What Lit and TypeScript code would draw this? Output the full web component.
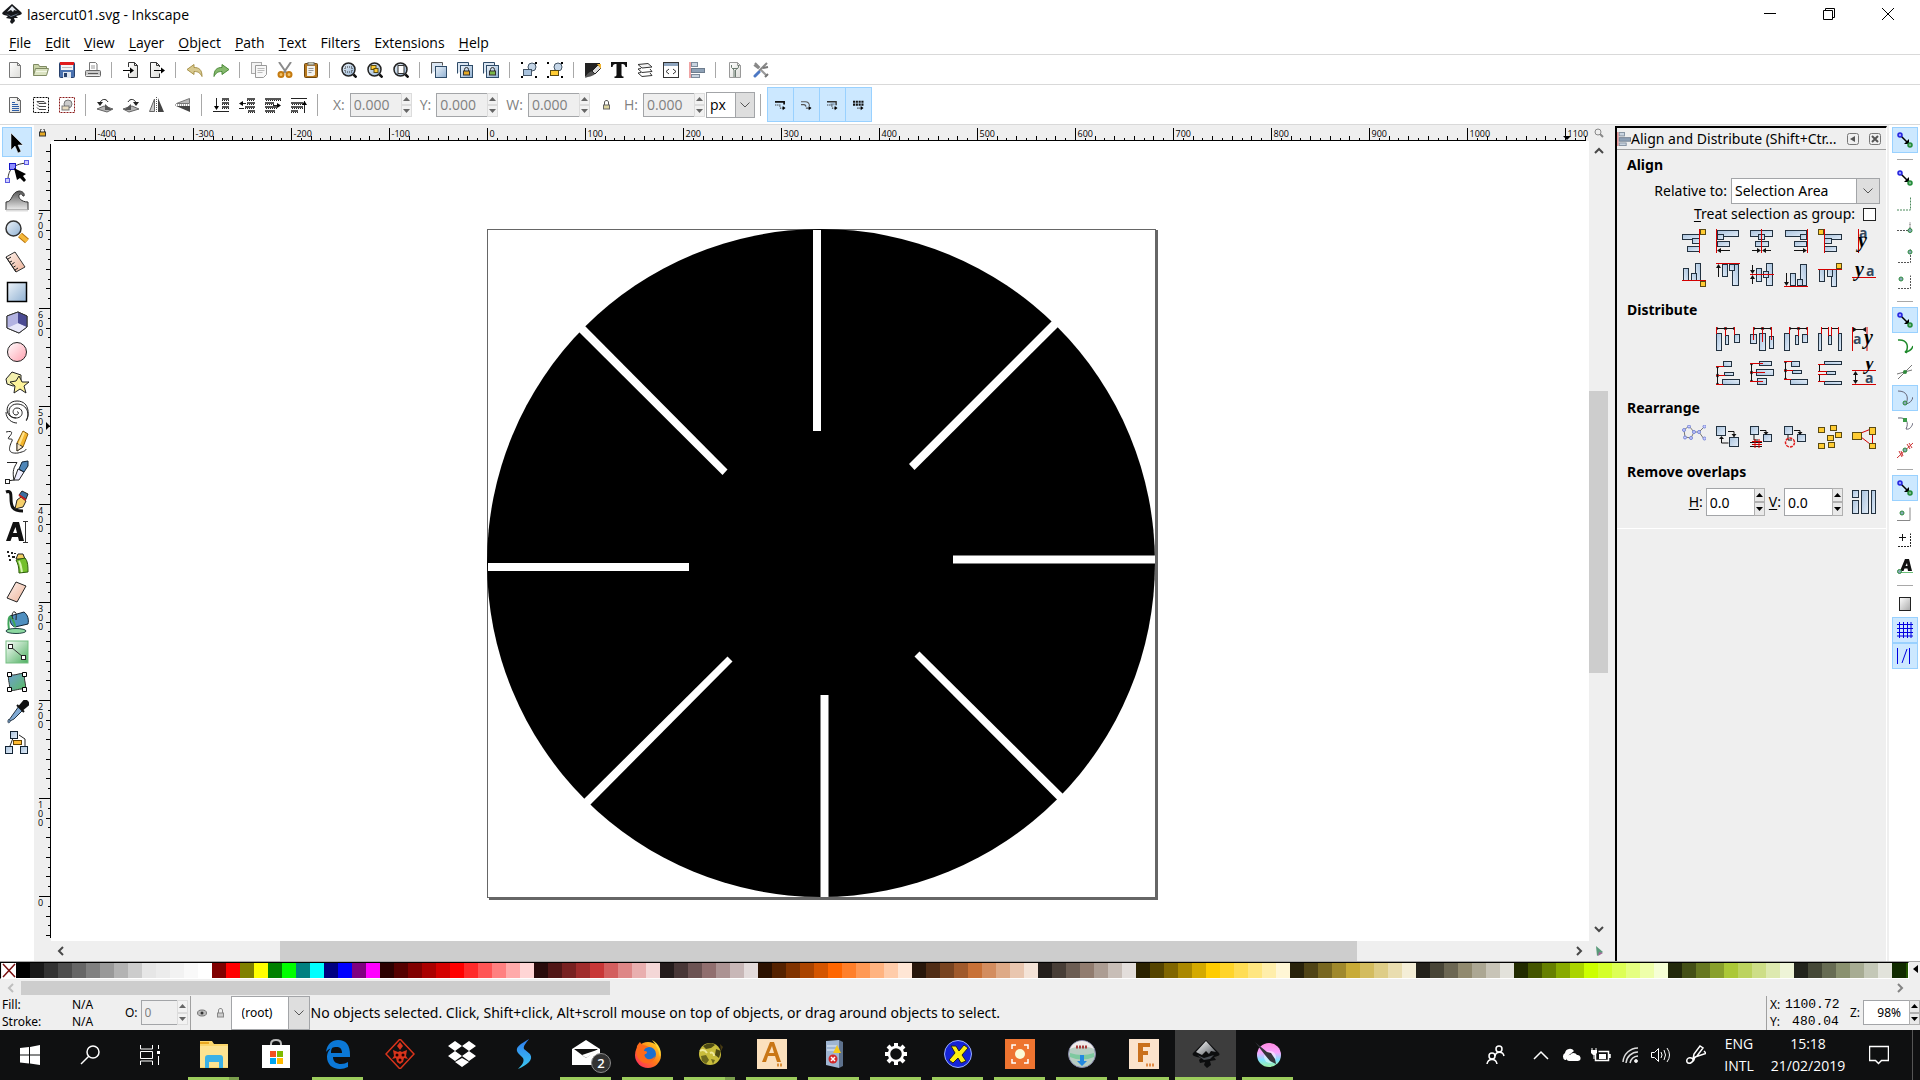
import { LitElement, html, svg, css, nothing, TemplateResult } from "lit";
import { customElement, state } from "lit/decorators.js";
import { classMap } from "lit/directives/class-map.js";
import { styleMap } from "lit/directives/style-map.js";

type Art = TemplateResult | TemplateResult[];

/* ---------- shared drawing helpers ---------- */

const bar = (x: number, y: number, w: number, h: number) =>
  svg`<rect x=${x} y=${y} width=${w} height=${h} fill="url(#blue)" stroke="#22313f"/>`;
const gold = (x: number, y: number, w = 5, h = 5) =>
  svg`<rect x=${x} y=${y} width=${w} height=${h} fill="#fc3" stroke="#5a4a12"/>`;
const red = (d: string) => svg`<path d=${d} stroke="#d40000" fill="none"/>`;
const ink = (d: string, w = 1) => svg`<path d=${d} stroke="#111" stroke-width=${w} fill="none"/>`;
const solid = (d: string, c = "#111") => svg`<path d=${d} fill=${c}/>`;
const turned = (deg: number, art: Art) => svg`<g transform="rotate(${deg} 12 12)">${art}</g>`;
const smaller = (art: Art) => svg`<g transform="translate(3 2) scale(.7)">${art}</g>`;

const DEFS = html`<svg class="defs" width="0" height="0" aria-hidden="true">
  <defs>
    <linearGradient id="blue" x1="0" y1="0" x2="1" y2="1"><stop offset="0" stop-color="#a9c3de"/><stop offset="1" stop-color="#e3edf8"/></linearGradient>
    <linearGradient id="blue2" x1="0" y1="0" x2="1" y2="1"><stop offset="0" stop-color="#eef4fa"/><stop offset="1" stop-color="#8fb0d2"/></linearGradient>
    <linearGradient id="paper" x1="0" y1="0" x2="1" y2="1"><stop offset="0" stop-color="#fff"/><stop offset="1" stop-color="#dcdcd8"/></linearGradient>
    <linearGradient id="shade" x1="0" y1="0" x2="1" y2="1"><stop offset="0" stop-color="#fff"/><stop offset="1" stop-color="#a8a8a8"/></linearGradient>
    <linearGradient id="pink" x1="0" y1="0" x2="1" y2="1"><stop offset="0" stop-color="#fff"/><stop offset="1" stop-color="#ff9fae"/></linearGradient>
    <linearGradient id="skin" x1="0" y1="0" x2="1" y2="1"><stop offset="0" stop-color="#fdf3ee"/><stop offset="1" stop-color="#eeb298"/></linearGradient>
    <linearGradient id="green" x1="0" y1="0" x2="1" y2="1"><stop offset="0" stop-color="#fff"/><stop offset="1" stop-color="#4caf5f"/></linearGradient>
    <linearGradient id="mesh" x1="0" y1="0" x2="1" y2="1"><stop offset="0" stop-color="#6f9fd0"/><stop offset="1" stop-color="#5bbd62"/></linearGradient>
    <linearGradient id="gray" x1="0" y1="0" x2="0" y2="1"><stop offset="0" stop-color="#555"/><stop offset="1" stop-color="#eee"/></linearGradient>
    <linearGradient id="steel" x1="0" y1="0" x2="1" y2="1"><stop offset="0" stop-color="#fff"/><stop offset="1" stop-color="#555a60"/></linearGradient>
    <linearGradient id="krita" x1="0" y1="0" x2="0" y2="1"><stop offset="0" stop-color="#ff8ae0"/><stop offset=".4" stop-color="#f7a8ff"/><stop offset=".7" stop-color="#7fe3ff"/><stop offset="1" stop-color="#9df0a0"/></linearGradient>
    <linearGradient id="fox" x1="0" y1="1" x2="1" y2="0"><stop offset="0" stop-color="#ff1f6b"/><stop offset=".5" stop-color="#ff7a18"/><stop offset="1" stop-color="#ffe226"/></linearGradient>
    <linearGradient id="bolt" x1="0" y1="0" x2="0" y2="1"><stop offset="0" stop-color="#2f7df0"/><stop offset="1" stop-color="#3bc8f0"/></linearGradient>
  </defs>
</svg>`;

const LOGO = svg`<path d="M10 0 L19 8 Q21 10 18 11 L14 12 16 14 12 14 13 17 10 20 8 18 9 15 4 14 6 12 2 11 Q-1 10 1 8Z" fill="#15171a"/><path d="M10 2 L15 7 12 6 11 8 9 6 5 8Z" fill="#e4e9f0"/><path d="M3 9l6 3 8-3-3 2-5 2z" fill="#6c7c90"/>`;

const page = (stroke: string) =>
  svg`<path d="M2.5 .5h8l3 3v12h-11z" fill="url(#paper)" stroke=${stroke}/><path d="M10.5 .5v3h3" fill="none" stroke=${stroke}/>`;
const lens = (inner: Art) =>
  svg`<circle cx="7.5" cy="7.5" r="6.500" fill="url(#blue2)" stroke="#222" stroke-width="1.500"/><path d="M12.500 12.500l3 3" stroke="#111" stroke-width="2.500"/>${inner}`;
const padlock = (x: number, y: number, body = "#e5a823") =>
  svg`<path d="M${x + 1.5} ${y + 3}v-1.500a2 2 0 0 1 4 0v1.500" fill="none" stroke="#333"/><rect x=${x + 0.5} y=${y + 3} width="6" height="4" fill=${body} stroke="#333"/>`;
const corners = svg`<path d="M0 0h2v2h-2zM14 0h2v2h-2zM0 14h2v2h-2zM14 14h2v2h-2z"/>`;
const stripes = (w: number[]) => w.map((n, i) => svg`<path d="M${16 - n} ${2 + i * 4}h${n}" stroke="#555" stroke-width="2"/><path d="M${16 - n} ${3.5 + i * 4}h${n}" stroke="#222" stroke-dasharray="1 1"/>`);

const ICONS: Record<string, Art> = {
  "New": page("#777"),
  "Open": svg`<path d="M.5 13.500v-11h5l1 2h7v2" fill="#c9d3a8" stroke="#7f8a63"/><path d="M.5 13.500l2-7h13l-2 7z" fill="#dbe3c2" stroke="#7f8a63"/><path d="M3 9.500h11" stroke="#f3f7e6"/>`,
  "Save": svg`<rect x=".5" y=".5" width="15" height="15" rx="1" fill="#4a72b0" stroke="#27406b"/><rect x="2" y="0" width="12" height="8" fill="#f4f4f4"/><rect x="1" y="0" width="14" height="3" fill="#e01b1b"/><path d="M3 5.500h10" stroke="#bbb"/><rect x="4" y="10" width="8" height="6" fill="#dfe6ef"/><rect x="5" y="11" width="3" height="4" fill="#27406b"/>`,
  "Print": svg`<path d="M4.500 8v-7.500h6l1.500 1.500v6" fill="#fff" stroke="#777"/><path d="M6 4h4M6 6h4" stroke="#999"/><rect x=".5" y="8.500" width="15" height="6" rx="1" fill="#c9c9c9" stroke="#666"/><path d="M3 11.500h10" stroke="#555"/><path d="M1 13.500h14" stroke="#eee"/>`,
  "Import": svg`<path d="M5.500 5v-4.500h6l3 3v12h-9v-4" fill="url(#paper)" stroke="#333"/><path d="M11.500 .500v3h3" fill="none" stroke="#333"/><path d="M0 8.500h8" stroke="#000"/><path d="M7 5.500l4 3-4 3z"/>`,
  "Export": svg`<path d="M10.500 5v-1.500l-3-3h-6v15h9v-4" fill="url(#paper)" stroke="#333"/><path d="M7.500 .500v3h3" fill="none" stroke="#333"/><path d="M5 8.500h8" stroke="#000"/><path d="M12 5.500l4 3-4 3z"/>`,
  "Undo": svg`<path d="M0 7.500l7-5v3c5 0 8 2 8 9-2-4-4-5-8-5v3z" fill="#d8c98f" stroke="#a8924a"/>`,
  "Redo": svg`<path d="M16 7.500l-7-5v3c-5 0-8 2-8 9 2-4 4-5 8-5v3z" fill="#86b96d" stroke="#4c8a3a"/>`,
  "Copy": svg`<rect x=".5" y=".5" width="10" height="11" fill="#f3f3f3" stroke="#aaa"/><path d="M4.500 3.500h11v9l-3 3h-8z" fill="#f8f8f8" stroke="#999"/><path d="M6.500 6.500h7M6.500 8.500h7M6.500 10.500h5" stroke="#bbb"/>`,
  "Cut": svg`<path d="M2 0l7.500 11M14 0l-7.500 11" stroke="#8b8b8b" stroke-width="2"/><circle cx="4" cy="12.500" r="2.500" fill="#f3c268" stroke="#c47a10" stroke-width="2"/><circle cx="12" cy="12.500" r="2.500" fill="#f3c268" stroke="#c47a10" stroke-width="2"/>`,
  "Paste": svg`<rect x="1.500" y="1.500" width="13" height="14" rx="1" fill="#b8791e" stroke="#6e470d"/><path d="M4 4h8v9l-2 1h-6z" fill="#f2f2ee"/><rect x="5" y="0" width="6" height="3" fill="#c9c9b0" stroke="#777"/><path d="M5.500 6.500h5M5.500 8.500h5M5.500 10.500h3" stroke="#999"/>`,
  "Zoom selection": lens(svg`<rect x="4" y="5" width="7" height="5" fill="none" stroke="#333" stroke-dasharray="1 1"/>`),
  "Zoom drawing": lens([gold(4, 3.5, 5, 4), gold(7, 6.5, 4, 4)]),
  "Zoom page": lens(svg`<rect x="5" y="3.500" width="6" height="8" fill="#fff" stroke="#333"/>`),
  "Duplicate": svg`<path d="M.5 11.500v-11h11v3" fill="#dbe6f2" stroke="#555"/><rect x="4.500" y="4.500" width="11" height="11" fill="url(#blue2)" stroke="#2e4b68"/>`,
  "Clone": svg`<path d="M.5 11.500v-11h11v3" fill="#dbe6f2" stroke="#2e4b68"/><rect x="3.500" y="3.500" width="12" height="12" fill="url(#blue2)" stroke="#2e4b68"/>${padlock(6, 6)}`,
  "Unlink clone": svg`<path d="M.5 11.500v-11h11v3" fill="#dbe6f2" stroke="#2e4b68"/><rect x="3.500" y="3.500" width="12" height="12" fill="url(#blue2)" stroke="#2e4b68"/>${padlock(6, 6, "#7ab648")}`,
  "Group": svg`${corners}<circle cx="11" cy="5" r="4" fill="#c5d6e8" stroke="#456"/><rect x="2.500" y="7.500" width="8" height="6" fill="#a9c3de" stroke="#456"/>`,
  "Ungroup": svg`${corners}<circle cx="11" cy="5" r="4" fill="#c5d6e8" stroke="#456"/>${gold(3.5, 8.5, 8, 5)}`,
  "Fill and stroke": svg`<path d="M0 1h15v4l-15 10z" fill="#222"/><path d="M0 16c2-5 5-6 7-7l3 3c-3 3-6 2-10 4z" fill="#555"/><path d="M7 9l6-6 3 3-6 6z" fill="#ddd" stroke="#222"/><path d="M12 2h4v5z" fill="#f2b632"/>`,
  "Text and font": svg`<path d="M0 0h16v5h-1.500q-.500-3-3-3h-1v11q0 1.500 2 1.500v1.500h-9v-1.500q2 0 2-1.500v-11h-1q-2.500 0-3 3h-1.500z" fill="#111"/>`,
  "Layers": svg`<path d="M1 2.500l10-1 4 3.500-10 1z" fill="#f2f2f2" stroke="#333"/><path d="M4 6.500l-3 .500 4 3.500 10-1-2-2.500M4 10.500l-3 .500 4 3.500 10-1-2-2.500" fill="none" stroke="#333"/>`,
  "XML editor": svg`<rect x=".5" y=".5" width="15" height="15" fill="#fff" stroke="#333"/><rect x="1" y="1" width="14" height="3" fill="#8fa6c0"/><path d="M6 7l-3 2.500 3 2.500M10 7l3 2.500-3 2.500" stroke="#333" fill="none"/>`,
  "Align and distribute": svg`<path d="M1 0v16" stroke="#e04a4a"/><rect x="2.500" y=".5" width="6" height="4" fill="#c9d4e0" stroke="#7d8b9b"/><rect x="2.500" y="6.500" width="13" height="4" fill="#8ea1b6" stroke="#6d7c8d"/><rect x="2.500" y="12.500" width="8" height="3" fill="#c9d4e0" stroke="#7d8b9b"/>`,
  "Preferences": svg`${page("#999")}<path d="M4.500 3v2.500l2.500 2.500v7M11.500 3v2.500l-3 2.500v7M5 6.500h6" stroke="#6b7a70" fill="none"/>`,
  "Document properties": svg`<path d="M2 1l4 4-1 1-4-3M14 1l-8 8" stroke="#888" stroke-width="2" fill="none"/><path d="M6 10l-4 4" stroke="#4d78c4" stroke-width="3" stroke-linecap="round"/><path d="M8 8l6 6" stroke="#999" stroke-width="2"/><path d="M10 6l5-1M12 15l3-3" stroke="#777" stroke-width="2"/>`,

  "Select all": svg`${page("#666")}<path d="M5 7.500h6M5 9.500h7M5 11.500h7M5 13.500h7M5 5.500h3" stroke="#2d5ea8"/>`,
  "Select all in layers": svg`<rect x=".5" y=".5" width="15" height="15" fill="none" stroke="#000" stroke-dasharray="2 1"/><path d="M4 4.500h7l2 2h-7zM4 7.500l2 2h7M4 10.500l2 2h7" fill="#eee" stroke="#444"/>`,
  "Deselect": svg`<rect x=".5" y=".5" width="15" height="15" fill="none" stroke="#8b1a1a" stroke-dasharray="2 1"/><circle cx="9" cy="7" r="4" fill="#ccc" stroke="#777"/><rect x="3" y="9" width="7" height="4" fill="#e8dcc0" stroke="#777"/>`,
  "Rotate left": svg`<path d="M0 12l7-3 9 3-6 3z" fill="#b5b5b5" stroke="#666"/><path d="M8 7v6h7z" fill="#555"/><path d="M3 6c1-4 6-5 8-1" fill="none" stroke="#222"/><path d="M0 5h6l-3 4z" fill="#222"/>`,
  "Rotate right": svg`<path d="M16 12l-7-3-9 3 6 3z" fill="#b5b5b5" stroke="#666"/><path d="M8 7v6h-7z" fill="#555"/><path d="M13 6c-1-4-6-5-8-1" fill="none" stroke="#222"/><path d="M16 5h-6l3 4z" fill="#222"/>`,
  "Flip horizontal": svg`<path d="M5.500 2v12.500h-5z" fill="#ccc" stroke="#666"/><path d="M9 1v14h6z" fill="#444"/><path d="M7.500 0v16" stroke="#555" stroke-dasharray="1 1"/>`,
  "Flip vertical": svg`<path d="M14.500 1.500v5h-13z" fill="#bbb" stroke="#777"/><path d="M15 9v6l-14-6z" fill="#444"/><path d="M0 8h16" stroke="#555" stroke-dasharray="1 1"/>`,
  "Lower to bottom": svg`${stripes([7, 7, 7])}<path d="M3.500 1v11M0 14.500h16" stroke="#222"/><path d="M1 9h5l-2.500 4z"/>`,
  "Lower": svg`${stripes([8, 8, 10, 7])}<path d="M2 6.500h5M0 11.500h5" stroke="#222"/><path d="M4 4v5l-4-2.500z"/>`,
  "Raise": svg`<g transform="matrix(-1 0 0 1 16 0)">${stripes([16, 9, 12, 10])}</g><path d="M8 8.500h6" stroke="#222"/><path d="M12 6v5l4-2.500z"/>`,
  "Raise to top": svg`<g transform="matrix(-1 0 0 1 16 0)">${stripes([0, 12, 12, 7])}</g><path d="M0 1.500h16M13.500 4v12" stroke="#222"/><path d="M11 8h5l-2.500-4z"/>`,
  "Scale stroke width": smaller(svg`<path d="M0 4h13v4" fill="none" stroke="#111" stroke-width="2.500"/><path d="M0 8.500h7v3M7 13h5" stroke="#444" stroke-dasharray="2 1" fill="none" stroke-width="1.500"/><path d="M11 10l4 3-4 3z"/>`),
  "Scale rounded corners": smaller(svg`<path d="M0 4h6q6 0 6 6" fill="none" stroke="#555" stroke-width="1.500"/><path d="M0 8h4q3 0 3 3M7 13h5" stroke="#555" fill="none" stroke-width="1.500"/><path d="M11 10l4 3-4 3z"/>`),
  "Move gradients": smaller(svg`<path d="M0 4h13v5" fill="none" stroke="#333" stroke-width="2"/><rect x="5" y="6" width="6" height="3" fill="#8fa8c0"/><path d="M0 8.500h7v3M7 13h5" stroke="#444" stroke-dasharray="2 1" fill="none" stroke-width="1.500"/><path d="M11 10l4 3-4 3z"/>`),
  "Move patterns": smaller(svg`<path d="M0 4h15M0 8h15" stroke="#111" stroke-width="3" stroke-dasharray="3 1"/><path d="M6 13h6" stroke="#444" stroke-dasharray="2 1" stroke-width="1.500"/><path d="M11 10l4 3-4 3z"/>`),
};

/* 24px tool glyphs */
const TOOLS: [string, Art][] = [
  ["Select", svg`<path d="M6 3v17l4-4 3 7 3-1.500-3-6.500h5z" fill="#000" stroke="#fff" stroke-width=".5"/>`],
  ["Edit nodes", svg`<path d="M3 20c0-9 4-16 19-17" fill="none" stroke="#333"/><rect x=".5" y="18.500" width="4" height="4" fill="#ccf" stroke="#5a5ae0"/><rect x="19.500" y=".500" width="4" height="4" fill="#ccf" stroke="#5a5ae0"/><rect x="4.500" y="3.500" width="6" height="6" fill="#8d8dff" stroke="#1515c8"/><path d="M9 8l12 6-3 2 3 4-2 2-4-4-3 2z" fill="#000"/>`],
  ["Tweak", svg`<path d="M1 12c7 0 5-10 13-11 4 0 6 3 5 5-2 1-1-3-4-2-3 2 0 8 8 8v8h-22z" fill="url(#gray)" stroke="#333"/><path d="M1 20.500h22" stroke="#ddd" stroke-width="2"/>`],
  ["Zoom", svg`<path d="M15 15l7 6" stroke="#b87510" stroke-width="6"/><path d="M15 15l7 6" stroke="#f5b83a" stroke-width="4"/><circle cx="8.500" cy="8.500" r="7.500" fill="url(#blue2)" stroke="#333" stroke-width="1.500"/>`],
  ["Measure", svg`<path d="M1 7l9-5 10 15-9 5z" fill="url(#skin)" stroke="#333"/><path d="M1 7l10 15M3 9l3-2M5 12l2-1M6.500 14.500l3-2M8.500 17l2-1M10 20l3-2" stroke="#222" fill="none"/>`],
  ["Rectangle", svg`<rect x="2.500" y="2.500" width="19" height="19" fill="url(#blue2)" stroke="#000" stroke-width="1.500"/>`],
  ["3D box", svg`<path d="M2 6l11-4 9 4v11l-8 6-12-5z" fill="#8c8ccb" stroke="#222"/><path d="M2 6l11-4v11l-11 5z" fill="#b3b3e2"/><path d="M13 13l9 4-8 6-12-5z" fill="#e8e8fa"/><path d="M13 2l9 4v11l-9-4z" fill="#4a4a92"/><path d="M2 6l11-4 9 4v11l-8 6-12-5z" fill="none" stroke="#333"/>`],
  ["Ellipse", svg`<circle cx="12" cy="12" r="9.500" fill="url(#pink)" stroke="#222"/>`],
  ["Star", svg`<path d="M1 9l6-7 9 3v9l-8 2-6-2z" fill="#f2efae" stroke="#222"/><path d="M14 6l3 6 7 0-5 4 2 7-6-4-6 4 1-7-5-4 6-1z" fill="#fdf39a" stroke="#222"/>`],
  ["Spiral", svg`<path d="M12 12c2-1 2 3-1 3-4 0-4-7 1-7 7 0 7 10-1 10-10 0-9-14 1-14 11 0 13 12 9 16M11 18c-12 0-12-17 1-17 14 0 12 17 9 20M1 12c0 7 6 11 11 11" fill="none" stroke="#222"/>`],
  ["Pencil", svg`<path d="M1 2c8-2 6 2 3 5-3 4 5 0 3 4-4 8-4 13 6 12 4-1 8-2 8-4" fill="none" stroke="#222"/><path d="M12 13l6-12 5 3-5 13-6 4z" fill="#f4b62c" stroke="#8a5c08"/><path d="M12 13l6 4-6 4z" fill="#f7e7c8" stroke="#333"/><path d="M18 2l2 1-5 12-2-1z" fill="#ffe28a"/>`],
  ["Bezier", svg`<path d="M2 2.500h10c-3 5-5 8-3 18" fill="none" stroke="#222"/><path d="M2 21l7-1" stroke="#222"/><rect x=".500" y="19.500" width="4" height="4" fill="#fff" stroke="#222"/><path d="M9 20l4-11 6 3-5 8z" fill="#eef" stroke="#222"/><path d="M14 9l3-7 6-1v5l-4 6z" fill="#4e86b8" stroke="#123"/>`],
  ["Calligraphy", svg`<path d="M1 2c5-2 5 2 5 6 0 8 1 13 12 13" fill="none" stroke="#111" stroke-width="3"/><path d="M10 19l2-9 4-3 5 4-3 6z" fill="#f6cf6a" stroke="#222"/><path d="M14 5l3-4 6 3-2 5z" fill="#3c6ea0" stroke="#222"/><path d="M14 5l7 5" stroke="#c62020" stroke-width="2"/>`],
  ["Text", svg`<path d="M1 21l7-19h6l5 19h-5l-1-4h-6l-1.500 4zM8 13h4l-1.500-6z" fill="#111" fill-rule="evenodd"/><path d="M18 1.500h5M20.500 1v21M18 22.500h5" stroke="#333"/>`],
  ["Spray", svg`<path d="M2 1h2v2h-2zM6 2h2v2h-2zM3 5h2v2h-2zM7 6h3v2h-3zM4 9h2v2h-2zM9 3h2v1h-2z" fill="#222"/><path d="M11 9l2-5 5 0 2 5z" fill="#f2cf62" stroke="#222"/><path d="M11 10l9-2c3 3 3 9 3 14l-9 1c0-6-1-9-3-13z" fill="#73c02c" stroke="#2e5c0d"/><path d="M14 11c2 3 2 7 3 11" stroke="#d7f5b0" stroke-width="2" fill="none"/>`],
  ["Eraser", svg`<path d="M2 18l9-16 10 4-9 16z" fill="url(#skin)" stroke="#222"/>`],
  ["Paint bucket", svg`<path d="M5 6l14-4c4 3 5 8 4 12l-13 3c-4-1-6-7-5-11z" fill="#4f8fc0" stroke="#123"/><path d="M5 6c-3 4-1 12-1 14M5 6c2 2 5 7 5 11" stroke="#3fa55a" stroke-width="2" fill="none"/><path d="M8 9c-2-5 0-8 2-7s1 6 1 8" fill="none" stroke="#222"/><ellipse cx="11" cy="21" rx="10" ry="2.500" fill="#8bd8a0" stroke="#244"/>`],
  ["Gradient", svg`<rect x="1" y="1" width="22" height="22" fill="url(#green)" stroke="#76bf83"/><path d="M6 7l12 10" stroke="#333"/><rect x="3.500" y="4.500" width="4" height="4" fill="#fff" stroke="#222"/><rect x="16.500" y="15.500" width="4" height="4" fill="#fff" stroke="#222"/>`],
  ["Mesh", svg`<path d="M4 4c6 3 10-2 16 0-2 6 2 10 0 16-5-3-10 2-16 0 2-5-2-10 0-16z" fill="url(#mesh)" stroke="#333"/><path d="M2.500 2.500h4v4h-4zM17.500 2.500h4v4h-4zM2.500 17.500h4v4h-4zM17.500 17.500h4v4h-4z" fill="#fff" stroke="#000"/>`],
  ["Dropper", svg`<path d="M14 6l4 4-9 9-4 2-1-1z" fill="#7fa9d4" stroke="#234"/><path d="M12 5l7 7M14 7l5-6c2-1 5 1 4 4l-6 5z" fill="#111" stroke="#111" stroke-width="2"/><path d="M4 19c3 3-1 5-1 3s0-2 1-3z" fill="#7fa9d4" stroke="#345"/>`],
  ["Connector", svg`<path d="M8 8l-3 8M14 5l6 4v7" fill="none" stroke="#222"/><rect x="5.500" y="1.500" width="7" height="7" fill="url(#blue)" stroke="#123"/><rect x=".5" y="16.500" width="7" height="7" fill="url(#blue)" stroke="#123"/><rect x="15.500" y="16.500" width="7" height="7" fill="url(#blue)" stroke="#123"/><rect x="8.500" y="10.500" width="8" height="4" fill="#fb3" stroke="#640"/>`],
];

/* 24px align-dialog glyphs */
const A_ANCHOR_R = [bar(0.5, 5.5, 17, 5), bar(10.5, 9.5, 7, 5), bar(5.5, 17.5, 12, 5), red("M17.500 0v24"), gold(18.5, 0.5)];
const A_LEFT = [bar(1.5, 1.5, 21, 6), bar(1.5, 5.5, 6, 5), bar(1.5, 12.5, 12, 5), red("M.500 0v24"), ink("M2 21.500h12"), solid("M5 19v5l-4-2.500z")];
const A_CENTER = [bar(0.5, 1.5, 22, 6), bar(8.5, 5.5, 6, 5), bar(5.5, 12.5, 13, 5), red("M11.500 0v24"), ink("M2 21.500h8M13 21.500h8"), solid("M7 19v5l4-2.500zM16 19v5l-4-2.500z")];
const A_RIGHT = [bar(1.5, 1.5, 21, 6), bar(16.5, 5.5, 6, 5), bar(10.5, 12.5, 12, 5), red("M23.500 0v24"), ink("M10 21.500h12"), solid("M19 19v5l4-2.500z")];
const A_ANCHOR_L = [bar(6.5, 5.5, 17, 5), bar(6.5, 9.5, 7, 5), bar(6.5, 17.5, 12, 5), red("M6.500 0v24"), gold(0.5, 0.5)];
const tips = (xs: number[]) => xs.map(x => solid(`M${x} 0v3l2-1.500zM${x + 8} 0v3l-2-1.500z`));
const D_LEFT = [bar(0.5, 6.5, 5, 17), bar(9.5, 8.5, 3, 9), bar(18.5, 7.5, 5, 8), red("M.500 0v7M9.500 0v9M18.500 0v8"), ink("M1 1.500h17"), tips([1, 10])].flat();
const D_MID = [bar(0.5, 7.5, 6, 9), bar(9.5, 6.5, 6, 17), bar(19.5, 9.5, 4, 12), red("M3.500 0v13M12.500 0v15M21.500 0v13"), ink("M4 1.500h17"), tips([4, 13])].flat();
const D_RIGHT = [bar(0.5, 6.5, 5, 17), bar(11.5, 8.5, 3, 9), bar(18.5, 7.5, 5, 8), red("M5.500 0v7M14.500 0v9M23.500 0v8"), ink("M6 1.500h17"), tips([6, 15])].flat();
const D_GAP = [bar(0.5, 6.5, 3, 17), bar(10.5, 8.5, 3, 9), bar(20.5, 6.5, 3, 17), red("M3.500 0v7M10.500 0v9M13.500 0v9M20.500 0v7"), ink("M4 1.500h6M14 1.500h6")];
const glyphA = (x: number, y: number) => svg`<text x=${x} y=${y} class="ga">a</text>`;
const glyphY = (x: number, y: number) => svg`<text x=${x} y=${y} class="gy">y</text>`;
const swap = [ink("M12 6.500h6v6M5.500 12v6h7"), bar(0.5, 1.5, 9, 9), bar(13.5, 12.5, 9, 9), solid("M15.500 9h5l-2.500 3z"), solid("M3 14h5l-2.500-3z")];
const swapS = [ink("M10 5.500h6v5"), bar(0.5, 1.5, 8, 8), bar(13.5, 9.5, 8, 7), solid("M13.500 7h5l-2.500 3z"), ink("M4 10v5h4")];

const ALIGN: [string, Art][][] = [
  [
    ["Align right edges to left anchor", A_ANCHOR_R], ["Align left edges", A_LEFT], ["Center on vertical axis", A_CENTER],
    ["Align right edges", A_RIGHT], ["Align left edges to right anchor", A_ANCHOR_L],
    ["Align text horizontally", [red("M6.500 0v24"), glyphA(7, 9), glyphY(6, 18)]],
  ],
  [
    ["Align bottom edges to top anchor", turned(90, A_ANCHOR_R)], ["Align top edges", turned(90, A_LEFT)], ["Center on horizontal axis", turned(90, A_CENTER)],
    ["Align bottom edges", turned(90, A_RIGHT)], ["Align top edges to bottom anchor", turned(90, A_ANCHOR_L)],
    ["Align text baselines", [red("M0 14.500h24"), glyphA(14, 13), glyphY(3, 13)]],
  ],
];
const DISTRIBUTE: [string, Art][][] = [
  [
    ["Distribute left edges", D_LEFT], ["Distribute centers horizontally", D_MID], ["Distribute right edges", D_RIGHT],
    ["Make horizontal gaps equal", D_GAP],
    ["Distribute text horizontally", [red("M.500 0v24M15 0v24"), ink("M2 2.500h11"), solid("M1 0v5l4-2.500zM14 0v5l-4-2.500z"), glyphA(1, 17), glyphY(12, 17)]],
  ],
  [
    ["Distribute bottom edges", turned(-90, D_LEFT)], ["Distribute centers vertically", turned(-90, D_MID)], ["Distribute top edges", turned(-90, D_RIGHT)],
    ["Make vertical gaps equal", turned(-90, D_GAP)],
    ["Distribute text vertically", [red("M0 9.500h24M0 23.500h24"), ink("M3.500 11v11"), solid("M1 14h5l-2.500-4zM1 19h5l-2.500 4z"), glyphA(13, 22), glyphY(13, 8)]],
  ],
];
const REARRANGE: [string, Art][] = [
  ["Arrange connector network", svg`<path d="M2 5l5-4 5 6-3 6-6-1zM12 7h5l6-6M17 7l5 7" fill="none" stroke="#777"/>${[[2, 5], [7, 1.5], [12, 7], [9, 13], [3, 12.5], [17, 7], [22.5, 1.5], [22.5, 13.5]].map(([x, y]) => svg`<circle cx=${x} cy=${y} r="1.500" fill="#ccf" stroke="#7788d8"/>`)}`],
  ["Exchange positions", swap],
  ["Exchange by stacking order", [swapS, ink("M0 17.500h12M0 21.500h12"), red("M5 14v9M9 14v9M2 16.500h10M2 19.500h10")].flat()],
  ["Exchange clockwise", [swapS, svg`<circle cx="6" cy="17.500" r="4.500" fill="none" stroke="#e02020" stroke-width="1.500" stroke-dasharray="3 1"/>`].flat()],
  ["Randomize centers", [gold(0.5, 2.5, 6, 5), gold(12.5, 0.5, 6, 5), gold(17.5, 7.5, 6, 5), gold(9.5, 10.5, 6, 5), gold(0.5, 18.5, 6, 5), gold(10.5, 17.5, 6, 5)]],
  ["Unclump objects", [red("M9 8l10-4M9 12l9 7M20.500 8v10"), gold(0.5, 7.5, 9, 7), gold(17.5, 2.5, 6, 7), gold(17.5, 18.5, 6, 5)]],
];
const OVERLAP: Art = [bar(0.5, 0.5, 6, 7), bar(0.5, 10.5, 6, 13), bar(9.5, 0.5, 7, 23), bar(19.5, 0.5, 4, 23)];

/* 16px snap glyphs */
const NODE = svg`<path d="M4 4l7 7" stroke="#000" stroke-width="1.500"/><path d="M12 12h-5l5-5z"/><circle cx="3" cy="3" r="2" fill="#99f" stroke="#22d" stroke-width="1.500"/><circle cx="13" cy="13" r="2" fill="#7cb68c" stroke="#1f8a35" stroke-width="1.500"/>`;
const dot = (x: number, y: number) => svg`<circle cx=${x} cy=${y} r="2" fill="#88a8b8" stroke="#2b8a3a"/>`;
const dash = (d: string, c = "#555") => svg`<path d=${d} fill="none" stroke=${c} stroke-dasharray="2 1"/>`;
const SNAP: ([string, Art, boolean] | null)[] = [
  ["Enable snapping", NODE, true], null,
  ["Snap bounding boxes", NODE, false],
  ["Snap to box edges", dash("M0 14h13.500v-13", "#4c8a5c"), false],
  ["Snap to box corners", [dash("M0 8.500h13v-8.500"), dot(13, 8.5)], false],
  ["Snap to edge midpoints", [dash("M1 14.500h12.500v-13"), dot(13, 4)], false],
  ["Snap to box centers", [dash("M1 14.500h12.500v-13"), dot(4, 5)], false], null,
  ["Snap nodes", NODE, true],
  ["Snap to paths", svg`<path d="M1 2c9-1 11 6 8 12 4-1 6-3 7-6M8 13l2 2" fill="none" stroke="#1f8a2c" stroke-width="1.500"/>`, false],
  ["Snap to intersections", [svg`<path d="M1 15l14-14M0 10l15-4" stroke="#777" fill="none"/>`, svg`<circle cx="8" cy="8" r="2" fill="#2f8a3b"/>`], false],
  ["Snap to cusp nodes", [svg`<path d="M1 1c9 0 11 6 8 13 4-1 6-3 7-7" fill="none" stroke="#667"/>`, dot(8, 13)], true],
  ["Snap to smooth nodes", [svg`<path d="M1 2c9-1 11 5 8 11 4 1 6-3 7-6" fill="none" stroke="#667"/>`, svg`<rect x="6" y="2" width="4" height="4" fill="#3a9a48"/>`], false],
  ["Snap to line midpoints", [svg`<path d="M0 16l16-15M2 9l3 6M10 2l3 5M4 9l2 5M12 1l3 5" stroke="#c33" fill="none"/>`, dot(8, 8)], false], null,
  ["Snap other points", NODE, true],
  ["Snap to object centers", [svg`<path d="M0 14.500h13v-13" fill="none" stroke="#888"/>`, dot(5, 7)], false],
  ["Snap to rotation centers", [dash("M1 14.500h12.500v-13", "#222"), ink("M5.500 2v7M2 5.500h7")], false],
  ["Snap to text baselines", [svg`<path d="M3 13l5-12h4l3 12h-4l-.500-2.500h-3l-1 2.500zM8.500 8h2l-.500-3z" fill="#111" fill-rule="evenodd"/><path d="M4 14.500h12" stroke="#6bbf78"/>`, dot(2.5, 13.5)], false], null,
  ["Snap to page border", svg`<rect x="2.500" y="1.500" width="11" height="13" fill="url(#shade)" stroke="#222"/>`, false],
  ["Snap to grids", svg`<path d="M0 2.500h16M0 6.500h16M0 10.500h16M0 14h16M2.500 0v16M6.500 0v16M10.500 0v16M14 0v16" stroke="#0000e0"/>`, true],
  ["Snap to guides", svg`<path d="M.500 0v16M12.500 0v16M5 15l5-14" stroke="#0000e0" fill="none"/>`, true],
];

/* 30px taskbar glyphs */
const APPS: [string, Art, string][] = [
  ["File Explorer", svg`<path d="M1 2h12l2 3h14v24h-28z" fill="#fbd66a"/><path d="M1 7h28v21h-28z" fill="#fde391"/><path d="M1 3h9v2h-9z" fill="#e9a820"/><path d="M6 29v-10q0-3 3-3h12q3 0 3 3v10h-4v-6h-10v6z" fill="#3cb1e6"/>`, "run multi"],
  ["Store", svg`<path d="M10 8v-3q0-4 5-4t5 4v3" fill="none" stroke="#bbb" stroke-width="2"/><rect x="1" y="6" width="28" height="23" fill="#fff"/><path d="M9 12h6v6h-6z" fill="#f25022"/><path d="M16 12h6v6h-6z" fill="#7fba00"/><path d="M9 19h6v6h-6z" fill="#00a4ef"/><path d="M16 19h6v6h-6z" fill="#ffb900"/>`, ""],
  ["Edge", svg`<path d="M3 13c1-8 6-12 12-12 8 0 12 5 12 15v2h-17c0 5 4 7 8 7 3 0 5-1 7-2v5c-3 1-5 2-8 2-8 0-13-5-13-12 0-4 2-8 6-10-2 2-2 4-2 6h11c0-4-2-6-5-6-4 0-9 2-11 5z" fill="#0b78d7"/>`, "run"],
  ["Studio", svg`<path d="M15 0l14 15-14 15-14-15z" fill="none" stroke="#d8341c" stroke-width="1.500"/><path d="M15 3l3 4-3 4-3-4zM8 11l5 2 2-1 2 1 5-2-1 6 2 3-4-1-1 4-3 2-3-2-1-4-4 1 2-3z" fill="#d8341c"/><circle cx="12" cy="16" r="1.500" fill="#200"/><circle cx="18" cy="16" r="1.500" fill="#200"/><circle cx="15" cy="21" r="1.500" fill="#200"/>`, ""],
  ["Dropbox", svg`<path d="M8 2l7 5-7 5-7-5zM22 2l7 5-7 5-7-5zM8 12l7 5-7 5-7-5zM22 12l7 5-7 5-7-5zM15 19l7 4-7 5-7-5z" fill="#fff"/>`, ""],
  ["Swift", svg`<path d="M20 0c-8 5-15 8-11 14l5 5c2 4-2 8-5 11 9-4 16-9 12-15l-6-5c-1-3 2-6 5-10z" fill="url(#bolt)"/>`, ""],
  ["Mail", svg`<path d="M1 10l14-9 14 9v16h-28z" fill="#fff"/><path d="M3 10h24l-12 9z" fill="#111"/><path d="M15 19l-4-3 18-6z" fill="#fff"/>`, "run"],
  ["Firefox", svg`<circle cx="15" cy="16" r="13" fill="url(#fox)"/><circle cx="16" cy="15" r="7" fill="#1b6fd0"/><path d="M4 7c1-2 2-3 3-4 2 4 6 3 9 5-3 0-5 2-5 4 3 0 4 1 2 3-2 0-2 2 0 4 3 3 8 0 9-2-1 6-6 8-10 7-6-1-10-7-8-17z" fill="#ff6a1a"/><path d="M19 1c7 4 10 10 8 17-1-7-3-11-8-17z" fill="#ffd93a"/>`, "run"],
  ["Globe", svg`<circle cx="15" cy="15" r="11" fill="#c9bd3c"/><path d="M8 7c4-3 9-4 12-1l-4 3-5 1zM21 10l5 2-2 7-4-3z" fill="#4d4a14"/><path d="M6 17l5-1 3 5-3 4-4-3zM16 20l4 1-2 4z" fill="#6e6a1d"/><path d="M5 12c3-2 5-1 7 2M15 14c2-1 4 0 4 3" stroke="#efe99a" stroke-width="2" fill="none"/><path d="M25 5l3 3-2 4z" fill="#4a3c12"/>`, "run multi"],
  ["AutoCAD", svg`<rect x="0" y="0" width="30" height="30" fill="#fbe0bd"/><path d="M5 23l8-20h4l7 20h-4l-2-6h-7l-2 6zM12 14h5l-2-7z" fill="#c97615" fill-rule="evenodd"/><path d="M20 26h6" stroke="#d98f3a" stroke-width="3" stroke-dasharray="2 1"/>`, "run"],
  ["Drive status", svg`<path d="M7 2l13-1v28l-13-3z" fill="#9fb6d2"/><path d="M20 1l4 2v24l-4 2z" fill="#5d718c"/><path d="M8 7h10M8 11h8" stroke="#e8f0fa"/><path d="M18 6l4 8h-8z" fill="#f5c91b"/><circle cx="14" cy="20" r="4.500" fill="#d42a2a"/><path d="M12 18l4 4M16 18l-4 4" stroke="#fff" stroke-width="1.500"/>`, "run"],
  ["Settings", svg`<circle cx="15" cy="15" r="7" fill="none" stroke="#fff" stroke-width="2.500"/><path d="M15 4v4M15 22v4M4 15h4M22 15h4M7 7l3 3M20 20l3 3M7 23l3-3M20 10l3-3" stroke="#fff" stroke-width="4"/>`, "run"],
  ["X viewer", svg`<circle cx="15" cy="15" r="13.500" fill="#1524d8" stroke="#9ab0ff"/><path d="M8 7l5 0 3 5 5-6 4 3-6 7 4 6-5 2-3-5-5 5-4-3 6-7z" fill="#fbee12" stroke="#222"/>`, "run"],
  ["Sun capture", svg`<rect x="0" y="0" width="30" height="30" fill="#ee7430"/><path d="M7 10v-4h4M19 6h4v4M23 20v4h-4M11 24h-4v-4" stroke="#fff" fill="none" stroke-width="1.500"/><circle cx="15" cy="15" r="5" fill="#fbfbd8"/>`, "run"],
  ["Note globe", svg`<circle cx="15" cy="15" r="13.500" fill="#b8cdc3" stroke="#88a"/><path d="M3 10c5-3 19-3 24 0-2-5-7-8-12-8s-10 3-12 8z" fill="#efeaea"/><path d="M9 8h12" stroke="#a53a3a" stroke-width="3" stroke-dasharray="2 1"/><path d="M3 14q12 4 24 0v4q-12 5-24 0z" fill="#7ec9a0"/><path d="M13 16h4v6h3l-5 5-5-5h3z" fill="#2388e0"/>`, "run"],
  ["Fusion 360", svg`<rect x="0" y="0" width="30" height="30" fill="#fbe3cc"/><path d="M9 23v-19h12v4h-7v4h5v4h-5v7z" fill="#c9701c"/><path d="M17 26h9" stroke="#e08a45" stroke-width="3" stroke-dasharray="2 1"/>`, "run"],
  ["Inkscape", svg`<path d="M15 1l13 13c2 3-2 3-5 4l2 3-6 1 1 4-4 3-3-3 1-3-5 1-1-3 2-2c-4-1-10-2-8-5z" fill="#0c0d0e"/><path d="M15 2l10 11-5-1-2 3-3-3-4 4-6-3z" fill="url(#steel)"/><path d="M6 16l7 3 10-3-4 4-6 1z" fill="#4a4f55"/>`, "run active"],
  ["Krita", svg`<circle cx="16" cy="16" r="12" fill="url(#krita)"/><circle cx="17" cy="18" r="6" fill="#fff" opacity=".5"/><path d="M2 3l12 10 4 1 4 6 1 5-6-3-5-6z" fill="#33343a"/>`, "run"],
];

const PALETTE = (
  "000000 1a1a1a 333333 4d4d4d 666666 808080 999999 b3b3b3 cccccc e6e6e6 ececec f2f2f2 f9f9f9 ffffff " +
  "800000 ff0000 808000 ffff00 008000 00ff00 008080 00ffff 000080 0000ff 800080 ff00ff " +
  "2b0000 550000 800000 aa0000 d40000 ff0000 ff2a2a ff5555 ff8080 ffaaaa ffd5d5 280b0b 501616 782121 a02c2c c83737 d35f5f de8787 e9afaf f4d7d7 241c1c 483737 6c5353 916f6f ac9393 c8b7b7 e3dbdb " +
  "2b1100 552200 803300 aa4400 d45500 ff6600 ff7f2a ff9955 ffb380 ffccaa ffe6d5 28170b 502d16 784421 a05a2c c87137 d38d5f deaa87 e9c6af f4e3d7 241f1c 483e37 6c5d53 917c6f ac9d93 c8beb7 e3dedb " +
  "2b2200 554400 806600 aa8800 d4aa00 ffcc00 ffd42a ffdd55 ffe680 ffeeaa fff6d5 28220b 504416 786721 a0892c c8ab37 d3bc5f decd87 e9ddaf f4eed7 24221c 484537 6c6753 918a6f aca793 c8c4b7 e3e2db " +
  "222b00 445500 668000 88aa00 aad400 ccff00 d4ff2a ddff55 e5ff80 eeffaa f6ffd5 22280b 445016 677821 89a02c abc837 bcd35f cdde87 dde9af eef4d7 22241c 454837 676c53 8a916f a7ac93 c4c8b7 e2e3db " +
  "112b00 225500"
).split(" ");

const MENUS: [string, string, string][] = [
  ["", "F", "ile"], ["", "E", "dit"], ["", "V", "iew"], ["", "L", "ayer"], ["", "O", "bject"],
  ["", "P", "ath"], ["", "T", "ext"], ["Filter", "s", ""], ["Exte", "n", "sions"], ["", "H", "elp"],
];
const COMMANDS = [
  "New", "Open", "Save", "Print", "|", "Import", "Export", "|", "Undo", "Redo", "|", "Copy", "Cut", "Paste", "|",
  "Zoom selection", "Zoom drawing", "Zoom page", "|", "Duplicate", "Clone", "Unlink clone", "|", "Group", "Ungroup", "|",
  "Fill and stroke", "Text and font", "Layers", "XML editor", "Align and distribute", "|", "Preferences", "Document properties",
];
const SELECT_BAR = [
  "Select all", "Select all in layers", "Deselect", "|", "Rotate left", "Rotate right", "Flip horizontal", "Flip vertical", "|",
  "Lower to bottom", "Lower", "Raise", "Raise to top", "|",
];
const AFFECT = ["Scale stroke width", "Scale rounded corners", "Move gradients", "Move patterns"];

const STEP = 98;

@customElement("app-root")
export class AppRoot extends LitElement {
  @state() private tool = "Select";

  static styles = css`
    :host { display: flex; flex-direction: column; min-height: 100vh; background: #fff; color: #000;
      font-family: "Open Sans", "Noto Sans", sans-serif; font-size: 14px; line-height: 20px; }
    * { box-sizing: border-box; }
    button, input, select { font: inherit; color: inherit; margin: 0; padding: 0; border: 0; background: none; border-radius: 0; outline: none; }
    button { display: flex; align-items: center; justify-content: center; flex: none; }
    svg { display: block; flex: none; }
    .defs { position: absolute; }
    .ga { font: bold 14px "Open Sans", sans-serif; fill: #34495e; }
    .gy { font: italic bold 20px "Liberation Serif", serif; fill: #000; }

    .title { display: flex; align-items: center; height: 28px; padding: 0 3px 0 2px; }
    .title h1 { font-size: 14px; font-weight: 400; margin: 0; flex: 1; padding: 2px 0 0 5px; }
    .title button { width: 59px; height: 28px; }
    .menus { display: flex; height: 26px; padding-left: 2px; }
    .menus button { padding: 4px 7px 0; }
    u { text-underline-offset: 2px; }
    .bar { display: flex; align-items: center; border-top: 1px solid #d9d9d9; padding-left: 2px; }
    .commands { height: 30px; }
    .controls { height: 40px; color: #808080; }
    .bar > button { width: 26px; height: 26px; }
    .rule { width: 1px; height: 16px; background: #a8a8a8; margin: 0 6px 0 5px; flex: none; }
    .controls .rule { height: 22px; }

    .field { display: flex; align-items: center; }
    .spin { display: flex; }
    .spin input { border: 1px solid #a3a5a8; border-right: 0; padding-left: 3px; background: #fff; height: 24px; min-width: 0; }
    .spin .steps { display: flex; flex-direction: column; width: 11px; }
    .steps button { flex: 1; border: 1px solid #b0b0b0; background: #e9e9e9; }
    .off input { background: #efefef; color: #808080; }
    .off .steps button { border-color: #dcdcdc; background: #f2f2f2; color: #666; }
    .measures { display: flex; align-items: center; padding-left: 9px; }
    .size input { width: 51px; }
    .size label { padding-right: 5px; }
    .size { margin-right: 8px; }
    .lockbtn { width: 18px; height: 24px; margin-right: 8px; }
    .unit { margin-right: 1px; }
    .combo { display: flex; border: 1px solid #a3a5a8; background: #fff; color: #000; }
    .combo select { appearance: none; flex: 1; min-width: 0; padding-left: 3px; }
    .combo .drop { display: flex; align-items: center; justify-content: center; width: 20px; background: #dedede; border: 1px solid #a3a5a8; margin: -1px -1px -1px 0; }
    .units { width: 49px; height: 26px; }
    .toggles { display: flex; }
    .toggles button { width: 27px; height: 35px; margin-right: -1px; }
    .on { background: #cce8ff; border: 1px solid #99d1ff; }

    .main { display: flex; flex: 1; border-top: 1px solid #d9d9d9; background: #efefef; }
    .tools { display: flex; flex-direction: column; width: 34px; padding: 2px 2px 0; background: #fff; }
    .tools button { width: 30px; height: 30px; }

    .desk { flex: 1; min-width: 0; display: grid; grid-template-columns: 17px minmax(0, 1fr) 26px; grid-template-rows: 16px minmax(0, 1fr) 20px; }
    .desk svg.fill { width: 100%; height: 100%; }
    .num { font-size: 9px; }
    .canvas { background: #fff; min-height: 0; }
    .cell { display: flex; align-items: center; justify-content: center; padding-right: 6px; }
    .cell.first { padding: 0; }
    .vscroll { display: flex; flex-direction: column; align-items: center; width: 19px; min-height: 0; padding-bottom: 2px; }
    .vscroll button { width: 19px; height: 20px; }
    .track { flex: 1; display: flex; align-self: stretch; min-height: 0; min-width: 0; }
    .vscroll .track { flex-direction: column; }
    .thumb { background: #cdcdcd; }
    .hscroll { display: flex; }
    .hscroll button { width: 20px; }

    .dialog { width: 272px; display: flex; flex-direction: column; border-left: 2px solid #000; border-top: 2px solid #000; border-right: 1px solid #fff; margin-top: 1px; font-family: "Noto Sans", "Open Sans", sans-serif; }
    .dialog header { display: flex; align-items: center; height: 22px; border-bottom: 1px solid #a0a0a0; white-space: nowrap; }
    .dialog header h2 { flex: 1; margin: 0; font-size: 14px; font-weight: 400; }
    .dialog header button { width: 22px; height: 20px; }
    .form { padding: 3px 6px 8px 10px; border-bottom: 1px solid #fff; margin-bottom: auto; }
    h3 { margin: 0; font-size: 14px; line-height: 24px; font-weight: 700; }
    .line + h3 { margin-top: 6px; }
    .line { display: flex; align-items: center; justify-content: flex-end; gap: 4px; }
    .relative { padding-top: 1px; }
    .relative .combo { width: 149px; height: 26px; }
    .relative .drop { width: 24px; }
    .group { height: 20px; padding-right: 4px; gap: 8px; }
    .group input { appearance: none; width: 13px; height: 13px; border: 1px solid #222; background: #fff; }
    .icons { height: 34px; gap: 10px; padding-right: 4px; }
    .icons button { width: 24px; height: 24px; }
    .gaps { height: 36px; padding-right: 4px; }
    .gaps .spin input { width: 48px; height: 28px; }
    .gaps label { padding-right: 3px; }
    .gaps .go { width: 24px; height: 28px; margin-left: 5px; }

    .snap { display: flex; flex-direction: column; align-items: center; width: 31px; margin-left: 2px; padding-top: 2px; background: #fff; }
    .snap button { width: 26px; height: 26px; }
    .snap hr { width: 16px; height: 1px; border: 0; background: #a8a8a8; margin: 6px 0 5px; }

    .palette { display: flex; height: 20px; background: #efefef; border-top: 1px solid #a9a9a9; }
    .swatches { display: flex; flex: 1; min-width: 0; overflow: hidden; border: 1px solid #fff; border-top: 1px solid #000; border-left: 1px solid #000; margin-right: 1px; height: 17px; padding-left: 1px; }
    .swatches button { width: 14px; height: 15px; }
    .palette .more { width: 10px; height: 14px; }
    .pscroll { display: flex; height: 14px; background: #efefef; }
    .pscroll button { width: 21px; color: #aaa; }
    .pscroll button:last-child { width: 40px; color: #555; }

    .status { display: flex; align-items: center; height: 35px; background: #efefef; white-space: nowrap; font-family: "Noto Sans", "Open Sans", sans-serif; }
    .paint { display: grid; grid-template-columns: 70px 53px; font-size: 12px; line-height: 17px; padding-left: 2px; }
    .small { font-size: 12px; }
    .small label { padding-right: 3px; }
    .opacity input { width: 36px; height: 25px; }
    .edge { width: 1px; align-self: stretch; background: #a0a0a0; margin: 1px 2px 0; }
    .mini { width: 19px; height: 20px; }
    .layer { width: 79px; height: 34px; font-size: 12px; }
    .layer select { padding-left: 10px; }
    .layer .drop { width: 22px; }
    .message { flex: 1; padding-left: 1px; }
    .coords { display: grid; grid-template-columns: 15px 65px; font-size: 12px; line-height: 17px; padding-left: 1px; }
    .coords b { font: 13px/17px "Liberation Mono", monospace; text-align: right; padding-right: 11px; }
    .zoom input { width: 46px; height: 25px; text-align: right; padding-right: 8px; }

    .taskbar { display: flex; height: 50px; background: #0f1011; color: #fff; }
    .taskbar > button { width: 60px; }
    .apps { display: flex; gap: 1px; flex: 1; padding-left: 3px; }
    .apps button { width: 61px; position: relative; border-bottom: 3px solid transparent; }
    .apps .run::after { content: ""; position: absolute; left: 5px; right: 5px; bottom: -3px; height: 3px; background: #9ccc5c; }
    .apps .multi::after { background: linear-gradient(90deg, #9ccc5c 41px, #7a9e4c 41px); }
    .apps .active { background: #3d3d3d; }
    .apps .active::after { left: 0; right: 0; }
    .badge { position: absolute; right: 5px; top: 23px; width: 20px; height: 20px; border: 1px solid #8a8a8a; border-radius: 10px; background: #333; font-size: 13px; line-height: 18px; font-weight: 600; text-align: center; }
    .tray { display: flex; align-items: center; }
    .tray button { width: 30px; height: 50px; }
    .tray .people { width: 60px; }
    .tray .pen { width: 40px; }
    .tray .lang { flex-direction: column; width: 46px; line-height: 22px; }
    .tray .clock { flex-direction: column; width: 92px; line-height: 22px; }
    .tray .notes { width: 50px; }
    .tray .peek { width: 16px; }
  `;

  private btn(name: string, art: Art, size: number, cls = "") {
    return html`<button class=${cls || nothing} aria-label=${name}><svg width=${size} height=${size} viewBox="0 0 ${size} ${size}">${art}</svg></button>`;
  }

  private strip(names: string[]) {
    return names.map(n => (n === "|" ? html`<span class="rule"></span>` : this.btn(n, ICONS[n], 16)));
  }

  private spin(id: string, label: TemplateResult | string, value: string, cls: string) {
    const off = cls.includes("off");
    return html`<div class="field ${cls}">
      <label for=${id}>${label}</label>
      <span class="spin"><input id=${id} type="text" .value=${value} ?disabled=${off}>
        <span class="steps">
          <button aria-label="Increase" ?disabled=${off}><svg width="7" height="4"><path d="M0 4L3.500 0 7 4z" fill="currentColor"/></svg></button>
          <button aria-label="Decrease" ?disabled=${off}><svg width="7" height="4"><path d="M0 0L3.500 4 7 0z" fill="currentColor"/></svg></button>
        </span></span>
    </div>`;
  }

  private combo(id: string, value: string, cls: string) {
    return html`<span class="combo ${cls}"><select id=${id} aria-label=${id === "relative" ? nothing : id}><option>${value}</option></select>
      <span class="drop"><svg width="10" height="6"><path d="M.500 .500l4.500 4.500 4.500-4.500" fill="none" stroke="#555"/></svg></span></span>`;
  }

  private chevron(name: string, d: string) {
    return html`<button aria-label=${name}><svg width="10" height="10"><path d=${d} fill="none" stroke="currentColor" stroke-width="2" opacity=".7"/></svg></button>`;
  }

  private rulerX() {
    const zero = 436;
    const out: TemplateResult[] = [];
    for (let u = -43; u <= 112; u++) {
      const x = Math.round(zero + (u * STEP) / 10) + 0.5;
      const h = u % 10 === 0 ? 13 : u % 2 === 0 ? 5 : 3;
      out.push(svg`<path d="M${x} ${16 - h}v${h}" stroke="#000"/>`);
      if (u % 10 === 0) out.push(svg`<text x=${x + 2} y="12" class="num">${u * 10}</text>`);
    }
    return out;
  }

  private rulerY() {
    const zero = 755;
    const out: TemplateResult[] = [];
    for (let u = -4; u <= 76; u++) {
      const y = Math.round(zero - (u * STEP) / 10) + 0.5;
      const w = u % 10 === 0 ? 12 : u % 2 === 0 ? 5 : 3;
      out.push(svg`<path d="M${17 - w} ${y}h${w}" stroke="#000"/>`);
      if (u % 10 === 0)
        String(u * 10).split("").forEach((c, i) => out.push(svg`<text x="4" y=${y + 9 + i * 9} class="num">${c}</text>`));
    }
    return out;
  }

  private iconRows(rows: [string, Art][][]) {
    return rows.map(r => html`<div class="line icons">${r.map(([n, a]) => this.btn(n, a, 24))}</div>`);
  }

  render() {
    return html`${DEFS}
      <header class="title">
        <svg width="20" height="20" viewBox="0 0 20 20">${LOGO}</svg>
        <h1>lasercut01.svg - Inkscape</h1>
        <button aria-label="Minimize"><svg width="12" height="12"><path d="M0 5.500h12" stroke="#000"/></svg></button>
        <button aria-label="Restore"><svg width="12" height="12"><path d="M.500 2.500h9v9h-9zM2.500 2.500v-2h9v9h-2" fill="none" stroke="#000"/></svg></button>
        <button aria-label="Close"><svg width="12" height="12"><path d="M0 0l12 12M12 0l-12 12" stroke="#000"/></svg></button>
      </header>
      <nav class="menus">${MENUS.map(([a, k, b]) => html`<button><span>${a}<u>${k}</u>${b}</span></button>`)}</nav>
      <div class="bar commands">${this.strip(COMMANDS)}</div>
      <div class="bar controls">
        ${this.strip(SELECT_BAR)}
        <div class="measures">
          ${this.spin("x", "X:", "0.000", "size off")}
          ${this.spin("y", "Y:", "0.000", "size off")}
          ${this.spin("w", "W:", "0.000", "size off")}
          <button class="lockbtn" aria-label="Lock ratio"><svg width="8" height="10"><path d="M1.500 5v-2a2 2 0 0 1 4-1v3" fill="none" stroke="#555"/><rect x=".5" y="5" width="6" height="4" fill="#ddd5a0" stroke="#666"/></svg></button>
          ${this.spin("h", "H:", "0.000", "size off unit")}
          ${this.combo("Units", "px", "units")}
        </div>
        <span class="rule"></span>
        <span class="toggles">${AFFECT.map(n => this.btn(n, ICONS[n], 16, "on"))}</span>
      </div>

      <main class="main">
        <nav class="tools">${TOOLS.map(([n, a]) => html`<button aria-label=${n} class=${classMap({ on: n === this.tool })} @click=${() => (this.tool = n)}><svg width="24" height="24" viewBox="0 0 24 24">${a}</svg></button>`)}</nav>

        <section class="desk">
          <div class="cell first"><svg width="8" height="8">${padlock(0, 0)}</svg></div>
          <svg class="fill">${this.rulerX()}<path d="M3 15.500H1535" stroke="#000"/><path d="M1512 11h8l-4 4z"/></svg>
          <div class="cell"><svg width="10" height="10"><circle cx="4" cy="4" r="3" fill="#eee" stroke="#888"/><path d="M6 6l3 3" stroke="#888" stroke-width="2"/></svg></div>

          <svg class="fill">${this.rulerY()}<path d="M16.500 3V797" stroke="#000"/><path d="M12 281v8l4-4z"/></svg>
          <svg class="fill canvas">
            <g transform="translate(-51 -141)">
              <path d="M489 897h667v-667h2v670h-669z" fill="#666"/>
              <rect x="487.500" y="229.500" width="668" height="668" fill="#fff" stroke="#666"/>
              <circle cx="821" cy="563" r="334"/>
              <g fill="#fff">
                <path d="M813 230h8v201h-8z"/>
                <path d="M820.500 695h8v202h-8z"/>
                <path d="M488 563h201v8h-201z"/>
                <path d="M953 555.500h202v8h-202z"/>
                <path d="M577 330l6-6 144.500 145.500-5 5.500z"/>
                <path d="M1054 319l6 6-145.500 145-5.500-6z"/>
                <path d="M1065 796l-5.500 6-145-145.500 5-5z"/>
                <path d="M581 802l6 6 145.500-146.500-5-5z"/>
              </g>
            </g>
          </svg>
          <div class="vscroll">
            ${this.chevron("Scroll up", "M1 7l4-4 4 4")}
            <div class="track"><div style="flex:230"></div><div class="thumb" style="flex:283"></div><div style="flex:246"></div></div>
            ${this.chevron("Scroll down", "M1 3l4 4 4-4")}
          </div>
          <div></div>
          <div class="hscroll">
            ${this.chevron("Scroll left", "M7 1l-4 4 4 4")}
            <div class="track"><div style="flex:209"></div><div class="thumb" style="flex:1077"></div><div style="flex:212"></div></div>
            ${this.chevron("Scroll right", "M3 1l4 4-4 4")}
          </div>
          <div class="cell"><svg width="9" height="10"><path d="M1 0l7 6-6 4z" fill="#5a9a7a"/><path d="M4 6l4 1-5 3z" fill="#a06a9a"/></svg></div>
        </section>

        <aside class="dialog">
          <header>
            <svg width="14" height="14" viewBox="0 0 16 16">${ICONS["Align and distribute"]}</svg>
            <h2>Align and Distribute (Shift+Ctr...</h2>
            <button aria-label="Iconify"><svg width="12" height="12"><rect x=".5" y=".5" width="11" height="11" rx="2" fill="none" stroke="#777"/><path d="M8 3v6l-5-3z" fill="#555"/></svg></button>
            <button aria-label="Close dialog"><svg width="12" height="12"><rect x=".5" y=".5" width="11" height="11" rx="2" fill="none" stroke="#777"/><path d="M3 3l6 6M9 3l-6 6" stroke="#555" stroke-width="2"/></svg></button>
          </header>
          <div class="form">
            <h3>Align</h3>
            <div class="line relative"><label for="relative">Relative to:</label>${this.combo("relative", "Selection Area", "")}</div>
            <div class="line group"><label for="group"><u>T</u>reat selection as group:</label><input id="group" type="checkbox"></div>
            ${this.iconRows(ALIGN)}
            <h3>Distribute</h3>
            ${this.iconRows(DISTRIBUTE)}
            <h3>Rearrange</h3>
            ${this.iconRows([REARRANGE])}
            <h3>Remove overlaps</h3>
            <div class="line gaps">
              ${this.spin("gaph", html`<u>H</u>:`, "0.0", "")}
              ${this.spin("gapv", html`<u>V</u>:`, "0.0", "")}
              ${this.btn("Remove overlaps", OVERLAP, 24, "go")}
            </div>
          </div>
        </aside>

        <nav class="snap">${SNAP.map(s => (s ? this.btn(s[0], s[1], 16, s[2] ? "on" : "") : html`<hr>`))}</nav>
      </main>

      <div class="palette">
        <div class="swatches">
          <button aria-label="None"><svg width="14" height="15"><path d="M0 0h14v15h-14z" fill="#fff"/><path d="M1 1l12 13M13 1l-12 13" stroke="#7a1010" stroke-width="1.500"/></svg></button>
          ${PALETTE.map(c => html`<button aria-label="#${c}" style=${styleMap({ background: "#" + c })}></button>`)}
        </div>
        <button class="more" aria-label="Palette menu"><svg width="5" height="8"><path d="M5 0v8l-5-4z"/></svg></button>
      </div>
      <div class="pscroll">
        ${this.chevron("Palette left", "M7 1l-4 4 4 4")}
        <div class="track"><div class="thumb" style="flex:589"></div><div style="flex:1270"></div></div>
        ${this.chevron("Palette right", "M3 1l4 4-4 4")}
      </div>

      <footer class="status">
        <div class="paint"><span>Fill:</span><span>N/A</span><span>Stroke:</span><span>N/A</span></div>
        ${this.spin("opacity", "O:", "0", "small opacity off")}
        <span class="edge"></span>
        <button class="mini" aria-label="Layer visibility"><svg width="10" height="8"><ellipse cx="5" cy="4" rx="4.500" ry="3" fill="#bbb" stroke="#777"/><circle cx="5" cy="4" r="1.500" fill="#333"/></svg></button>
        <button class="mini" aria-label="Layer lock"><svg width="8" height="10"><path d="M1.500 5v-2a2 2 0 0 1 4-1v3" fill="none" stroke="#888"/><rect x=".5" y="5" width="6" height="4" fill="#ccc" stroke="#888"/></svg></button>
        ${this.combo("Layer", "(root)", "layer")}
        <span class="message">No objects selected. Click, Shift+click, Alt+scroll mouse on top of objects, or drag around objects to select.</span>
        <span class="edge"></span>
        <div class="coords"><span>X:</span><b>1100.72</b><span>Y:</span><b>480.04</b></div>
        ${this.spin("zoom", "Z:", "98%", "small zoom")}
      </footer>

      <nav class="taskbar">
        <button aria-label="Start"><svg width="20" height="20"><path d="M0 3l9-1v7.500h-9zM10 2l10-2v9.500h-10zM0 10.500h9v8l-9-1zM10 10.500h10v9.500l-10-1.500z" fill="#fff"/></svg></button>
        <button aria-label="Search"><svg width="20" height="20"><circle cx="13" cy="7" r="6" fill="none" stroke="#fff" stroke-width="1.500"/><path d="M9 11l-8 8" stroke="#fff" stroke-width="1.500"/></svg></button>
        <button aria-label="Task view"><svg width="20" height="20"><path d="M.500 0v4h12v-4M.500 20v-4h12v4M.500 6.500h12v7h-12zM18.500 0v4M18.500 11v9" fill="none" stroke="#fff"/><path d="M17 6h3v3h-3z" fill="#fff"/></svg></button>
        <div class="apps">${APPS.map(([n, a, c]) => html`<button aria-label=${n} class=${c}><svg width="30" height="30">${a}</svg>${n === "Mail" ? html`<span class="badge">2</span>` : nothing}</button>`)}</div>
        <div class="tray">
          <button class="people" aria-label="People"><svg width="20" height="20" fill="none" stroke="#fff" stroke-width="1.500"><circle cx="13" cy="4" r="3"/><path d="M9 11c1-5 8-5 9 0"/><circle cx="6" cy="11" r="3"/><path d="M1 19c1-6 9-6 10 0"/></svg></button>
          <button aria-label="Hidden icons"><svg width="16" height="10"><path d="M1 9l7-7 7 7" fill="none" stroke="#fff" stroke-width="1.500"/></svg></button>
          <button aria-label="Cloud"><svg width="20" height="14"><path d="M4 12a4 4 0 0 1 0-7 5 5 0 0 1 9-2l-5 4-3 5z" fill="#fff"/><path d="M8 13a3 3 0 0 1 1-6 4 4 0 0 1 7 0 3 3 0 0 1 1 6z" fill="#fff"/></svg></button>
          <button aria-label="Battery"><svg width="22" height="14"><path d="M5.500 5.500v7h13v-9h-10M20 6v4" fill="none" stroke="#fff" stroke-width="1.500"/><path d="M9 6h7v5h-7zM1 2h6v3l-2 2h-2l-2-2z" fill="#fff"/><path d="M2 0v3M6 0v3M4 6v5" stroke="#fff"/></svg></button>
          <button aria-label="Wi-Fi"><svg width="18" height="18" fill="none" stroke="#ddd"><path d="M1 16A15 15 0 0 1 16 2M4 17A12 12 0 0 1 16 6M8 17A9 9 0 0 1 16 10" stroke-width="1.500"/><circle cx="14" cy="15" r="1.500" fill="#fff"/></svg></button>
          <button aria-label="Volume"><svg width="20" height="16" fill="none" stroke="#fff"><path d="M.500 5.500h3l4-4v13l-4-4h-3z"/><path d="M10 5q2 3 0 6M13 3q3 5 0 10M16 1q5 7 0 14"/></svg></button>
          <button class="pen" aria-label="Pen"><svg width="20" height="20" fill="none" stroke="#fff" stroke-width="1.500"><path d="M7 14l1-5 6-8 3 2-6 8zM7 14c-4-3-7 0-6 3 2 3 7 0 8-5l9-3q3 0 0-3"/></svg></button>
          <button class="lang"><span>ENG</span><span>INTL</span></button>
          <button class="clock"><span>15:18</span><span>21/02/2019</span></button>
          <button class="notes" aria-label="Notifications"><svg width="20" height="20"><path d="M.500 1.500h19v14h-7l-3 3-3-3h-6z" fill="none" stroke="#fff" stroke-width="1.500"/></svg></button>
          <button class="peek" aria-label="Show desktop"><svg width="1" height="50"><path d="M.500 0v50" stroke="#555"/></svg></button>
        </div>
      </nav>`;
  }
}
